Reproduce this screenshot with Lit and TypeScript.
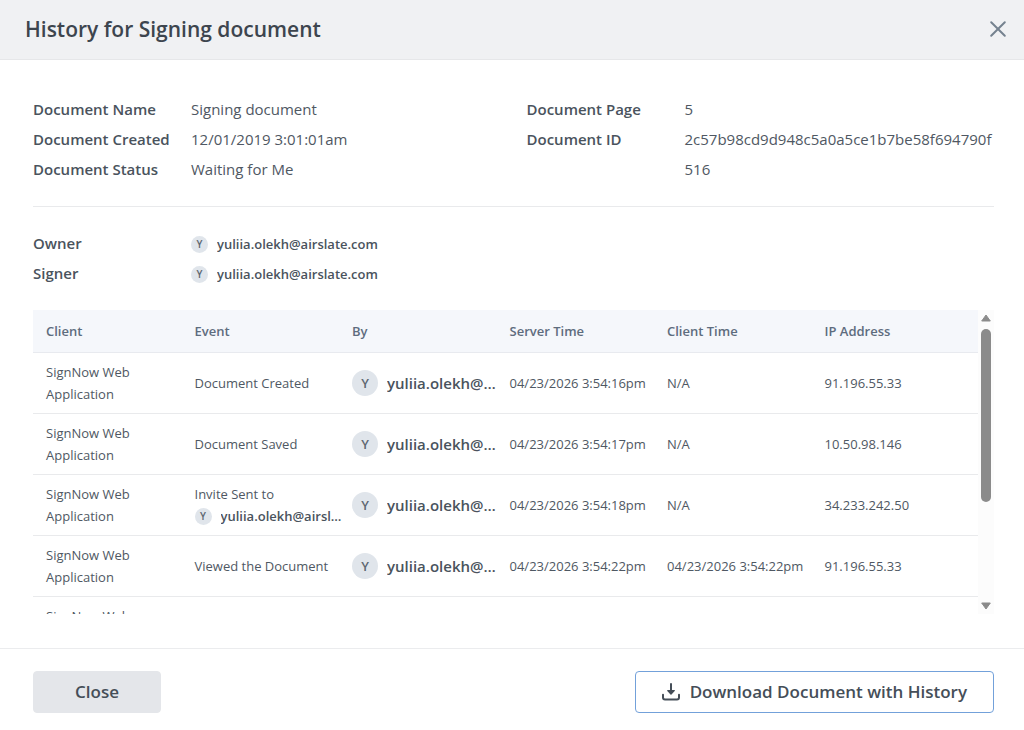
import { LitElement, html, svg, css, nothing } from "lit";
import { customElement, property, query } from "lit/decorators.js";

interface HistoryEvent {
  client: string;
  event: string;
  recipient?: string;
  by: string;
  serverTime: string;
  clientTime: string;
  ip: string;
}

const USER = "yuliia.olekh@airslate.com";
const CLIENT = "SignNow Web Application";

const COLUMNS = ["Client", "Event", "By", "Server Time", "Client Time", "IP Address"];

const EVENTS: HistoryEvent[] = [
  { client: CLIENT, event: "Document Created", by: USER, serverTime: "04/23/2026 3:54:16pm", clientTime: "N/A", ip: "91.196.55.33" },
  { client: CLIENT, event: "Document Saved", by: USER, serverTime: "04/23/2026 3:54:17pm", clientTime: "N/A", ip: "10.50.98.146" },
  { client: CLIENT, event: "Invite Sent to", recipient: USER, by: USER, serverTime: "04/23/2026 3:54:18pm", clientTime: "N/A", ip: "34.233.242.50" },
  { client: CLIENT, event: "Viewed the Document", by: USER, serverTime: "04/23/2026 3:54:22pm", clientTime: "04/23/2026 3:54:22pm", ip: "91.196.55.33" },
  { client: CLIENT, event: "Document Saved", by: USER, serverTime: "04/23/2026 3:54:23pm", clientTime: "N/A", ip: "10.50.98.146" },
];

@customElement("user-chip")
export class UserChip extends LitElement {
  @property() email = "";
  @property({ reflect: true }) size: "small" | "large" = "small";

  static styles = css`
    :host {
      display: flex;
      align-items: center;
      gap: 9px;
      min-width: 0;
      font-size: 13px;
      line-height: 22px;
      font-weight: 600;
      color: #4a535d;
    }
    :host([size="large"]) {
      font-size: 15px;
    }
    .avatar {
      flex: none;
      display: grid;
      place-items: center;
      width: 17px;
      height: 17px;
      border-radius: 50%;
      background: #e0e5eb;
      color: #5d6771;
      font-size: 10px;
      line-height: 1;
    }
    :host([size="large"]) .avatar {
      width: 26px;
      height: 26px;
      font-size: 13px;
    }
    .email {
      overflow: hidden;
      text-overflow: ellipsis;
      white-space: nowrap;
    }
  `;

  render() {
    return html`
      <span class="avatar" aria-hidden="true">${this.email.charAt(0).toUpperCase()}</span>
      <span class="email">${this.email}</span>
    `;
  }
}

@customElement("app-root")
export class AppRoot extends LitElement {
  @query(".scroller") private scroller!: HTMLElement;

  static styles = css`
    :host {
      display: flex;
      flex-direction: column;
      min-height: 100vh;
      box-sizing: border-box;
      background: #fff;
      color: #4f5863;
      font-family: "Open Sans", "Noto Sans", sans-serif;
      font-size: 15px;
      line-height: 30px;
    }
    *,
    *::before {
      box-sizing: border-box;
    }
    button {
      font: inherit;
      color: inherit;
      cursor: pointer;
    }
    .header {
      display: flex;
      align-items: center;
      justify-content: space-between;
      height: 60px;
      padding: 0 16px 1px 25px;
      background: #f0f1f3;
      border-bottom: 1px solid #e6e7e9;
    }
    .title {
      margin: 0;
      font-size: 21px;
      font-weight: 600;
      color: #3d454e;
    }
    .dismiss {
      display: grid;
      padding: 0;
      border: 0;
      background: none;
      color: #75828f;
    }
    .body {
      flex: 1;
      padding: 34px 30px 34px 33px;
    }
    .details {
      display: grid;
      grid-template-columns: 1fr 1fr;
      column-gap: 26px;
      padding-bottom: 22px;
      border-bottom: 1px solid #e9eaec;
    }
    .list {
      margin: 0;
    }
    .pair {
      display: grid;
      grid-template-columns: 158px 1fr;
    }
    .term {
      font-weight: 600;
      color: #4a535d;
    }
    .value {
      margin: 0;
      min-width: 0;
      word-break: break-all;
    }
    .people {
      margin: 0;
      padding: 21px 0 22px;
    }
    .person {
      display: flex;
      align-items: center;
      padding-top: 2px;
    }
    .pane {
      display: flex;
      height: 304px;
    }
    .scroller {
      flex: 1;
      overflow-y: auto;
      scrollbar-width: none;
    }
    .table {
      width: 100%;
      table-layout: fixed;
      border-collapse: separate;
      border-spacing: 0;
      font-size: 13px;
      line-height: 22px;
    }
    .head {
      height: 43px;
      padding: 0 4px;
      text-align: left;
      font-weight: 600;
      color: #5e6c7e;
      background: #f5f7fb;
      border-bottom: 1px solid #e8eaef;
    }
    .cell {
      height: 61px;
      padding: 8px 4px;
      vertical-align: middle;
      border-bottom: 1px solid #e9eaec;
    }
    .head:first-child,
    .cell:first-child {
      padding-left: 13px;
      padding-right: 40px;
    }
    .scrollbar {
      flex: none;
      display: flex;
      flex-direction: column;
      width: 16px;
      background: #fcfcfc;
      color: #8b8b8b;
    }
    .step {
      display: flex;
      justify-content: center;
      align-items: flex-start;
      height: 19px;
      padding: 4px 0;
      border: 0;
      background: none;
    }
    .step:last-child {
      align-items: flex-end;
    }
    .track {
      flex: 1;
      display: flex;
      justify-content: center;
    }
    .thumb {
      width: 10px;
      height: 65%;
      border-radius: 5px;
      background: #8b8b8b;
    }
    .footer {
      display: flex;
      align-items: flex-start;
      justify-content: space-between;
      padding: 22px 30px 17px 33px;
      border-top: 1px solid #ebecee;
    }
    .button {
      display: flex;
      align-items: center;
      justify-content: center;
      gap: 10px;
      min-width: 128px;
      height: 42px;
      padding: 0 26px;
      border: 1px solid #e4e6ea;
      border-radius: 4px;
      background: #e4e6ea;
      color: #454e58;
      font-size: 17px;
      font-weight: 600;
    }
    .outline {
      border-color: #73a1da;
      background: #fff;
    }
  `;

  private scrollRows(amount: number) {
    this.scroller.scrollBy({ top: amount, behavior: "smooth" });
  }

  private renderPair(term: string, value: string) {
    return html`<div class="pair"><dt class="term">${term}</dt><dd class="value">${value}</dd></div>`;
  }

  private renderPerson(role: string) {
    return html`<div class="pair">
      <dt class="term">${role}</dt>
      <dd class="value person"><user-chip email=${USER}></user-chip></dd>
    </div>`;
  }

  private renderArrow(points: string) {
    return svg`<svg width="10" height="8" viewBox="0 0 10 8" fill="currentColor" stroke="currentColor" stroke-linejoin="round" aria-hidden="true"><polygon points=${points}></polygon></svg>`;
  }

  private renderRow(row: HistoryEvent) {
    return html`<tr>
      <td class="cell">${row.client}</td>
      <td class="cell">
        ${row.event}${row.recipient ? html`<user-chip email=${row.recipient}></user-chip>` : nothing}
      </td>
      <td class="cell"><user-chip size="large" email=${row.by}></user-chip></td>
      <td class="cell">${row.serverTime}</td>
      <td class="cell">${row.clientTime}</td>
      <td class="cell">${row.ip}</td>
    </tr>`;
  }

  render() {
    return html`
      <header class="header">
        <h1 class="title">History for Signing document</h1>
        <button class="dismiss" type="button" aria-label="Dismiss">
          <svg width="20" height="20" viewBox="0 0 20 20" fill="none" stroke="currentColor" stroke-width="2" stroke-linecap="round" aria-hidden="true">
            <path d="M3.2 3.2 16.8 16.8M16.8 3.2 3.2 16.8"></path>
          </svg>
        </button>
      </header>
      <main class="body">
        <section class="details">
          <dl class="list">
            ${this.renderPair("Document Name", "Signing document")}
            ${this.renderPair("Document Created", "12/01/2019 3:01:01am")}
            ${this.renderPair("Document Status", "Waiting for Me")}
          </dl>
          <dl class="list">
            ${this.renderPair("Document Page", "5")}
            ${this.renderPair("Document ID", "2c57b98cd9d948c5a0a5ce1b7be58f694790f516")}
          </dl>
        </section>
        <dl class="people">${this.renderPerson("Owner")}${this.renderPerson("Signer")}</dl>
        <section class="pane">
          <div class="scroller">
            <table class="table">
              <thead>
                <tr>${COLUMNS.map((name) => html`<th class="head" scope="col">${name}</th>`)}</tr>
              </thead>
              <tbody>${EVENTS.map((row) => this.renderRow(row))}</tbody>
            </table>
          </div>
          <div class="scrollbar">
            <button class="step" type="button" aria-label="Scroll up" @click=${() => this.scrollRows(-61)}>
              ${this.renderArrow("5,1 9.3,7 0.7,7")}
            </button>
            <div class="track"><div class="thumb"></div></div>
            <button class="step" type="button" aria-label="Scroll down" @click=${() => this.scrollRows(61)}>
              ${this.renderArrow("0.7,1 9.3,1 5,7")}
            </button>
          </div>
        </section>
      </main>
      <footer class="footer">
        <button class="button" type="button">Close</button>
        <button class="button outline" type="button">
          <svg width="18" height="18" viewBox="0 0 18 18" fill="none" stroke="currentColor" stroke-width="2" stroke-linecap="round" stroke-linejoin="round" aria-hidden="true">
            <path d="M1 11.8v2.6a2 2 0 0 0 2 2h12a2 2 0 0 0 2-2v-2.6"></path>
            <path d="M9 1v9"></path>
            <path d="M5.8 7.6 9 11 12.2 7.6Z" fill="currentColor" stroke-width="1.4"></path>
          </svg>
          Download Document with History
        </button>
      </footer>
    `;
  }
}
